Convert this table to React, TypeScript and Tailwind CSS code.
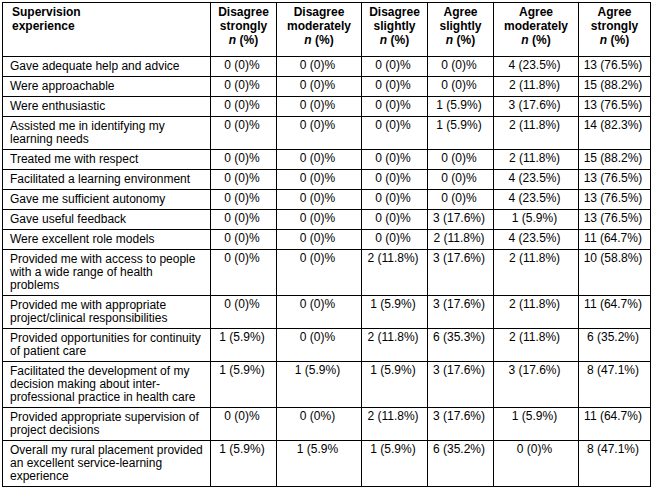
import React from "react";

type Row = { label: React.ReactNode; values: string[] };

const rows: Row[] = [
  { label: "Gave adequate help and advice", values: ["0 (0)%", "0 (0)%", "0 (0)%", "0 (0)%", "4 (23.5%)", "13 (76.5%)"] },
  { label: "Were approachable", values: ["0 (0)%", "0 (0)%", "0 (0)%", "0 (0)%", "2 (11.8%)", "15 (88.2%)"] },
  { label: "Were enthusiastic", values: ["0 (0)%", "0 (0)%", "0 (0)%", "1 (5.9%)", "3 (17.6%)", "13 (76.5%)"] },
  { label: <>Assisted me in identifying my<br />learning needs</>, values: ["0 (0)%", "0 (0)%", "0 (0)%", "1 (5.9%)", "2 (11.8%)", "14 (82.3%)"] },
  { label: "Treated me with respect", values: ["0 (0)%", "0 (0)%", "0 (0)%", "0 (0)%", "2 (11.8%)", "15 (88.2%)"] },
  { label: "Facilitated a learning environment", values: ["0 (0)%", "0 (0)%", "0 (0)%", "0 (0)%", "4 (23.5%)", "13 (76.5%)"] },
  { label: "Gave me sufficient autonomy", values: ["0 (0)%", "0 (0)%", "0 (0)%", "0 (0)%", "4 (23.5%)", "13 (76.5%)"] },
  { label: "Gave useful feedback", values: ["0 (0)%", "0 (0)%", "0 (0)%", "3 (17.6%)", "1 (5.9%)", "13 (76.5%)"] },
  { label: "Were excellent role models", values: ["0 (0)%", "0 (0)%", "0 (0)%", "2 (11.8%)", "4 (23.5%)", "11 (64.7%)"] },
  { label: <>Provided me with access to people<br />with a wide range of health<br />problems</>, values: ["0 (0)%", "0 (0)%", "2 (11.8%)", "3 (17.6%)", "2 (11.8%)", "10 (58.8%)"] },
  { label: <>Provided me with appropriate<br />project/clinical responsibilities</>, values: ["0 (0)%", "0 (0)%", "1 (5.9%)", "3 (17.6%)", "2 (11.8%)", "11 (64.7%)"] },
  { label: <>Provided opportunities for continuity<br />of patient care</>, values: ["1 (5.9%)", "0 (0)%", "2 (11.8%)", "6 (35.3%)", "2 (11.8%)", "6 (35.2%)"] },
  { label: <>Facilitated the development of my<br />decision making about inter-<br />professional practice in health care</>, values: ["1 (5.9%)", "1 (5.9%)", "1 (5.9%)", "3 (17.6%)", "3 (17.6%)", "8 (47.1%)"] },
  { label: <>Provided appropriate supervision of<br />project decisions</>, values: ["0 (0)%", "0 (0%)", "2 (11.8%)", "3 (17.6%)", "1 (5.9%)", "11 (64.7%)"] },
  { label: <>Overall my rural placement provided<br />an excellent service-learning<br />experience</>, values: ["1 (5.9%)", "1 (5.9%", "1 (5.9%)", "6 (35.2%)", "0 (0)%", "8 (47.1%)"] },
];

const headers: [string, string][] = [
  ["Disagree", "strongly"],
  ["Disagree", "moderately"],
  ["Disagree", "slightly"],
  ["Agree", "slightly"],
  ["Agree", "moderately"],
  ["Agree", "strongly"],
];

export default function App() {
  return (
    <div className="min-h-[495px] bg-white pl-[2px] pt-[2px] font-['Liberation_Sans',Arial,sans-serif] text-[12px] text-black">
      <div className="grid w-fit grid-cols-[207px_65px_84px_65px_65px_84px_71px] gap-px bg-black p-px">
        <div className="h-[53px] bg-white pl-[9px] pt-[2px] font-bold leading-[14px]">
          Supervision
          <br />
          experience
        </div>
        {headers.map(([a, b], i) => (
          <div key={i} className="h-[53px] bg-white pt-[2px] text-center font-bold leading-[14px]">
            {a}
            <br />
            {b}
            <br />
            <i>n</i> (%)
          </div>
        ))}
        {rows.map((r, ri) => (
          <React.Fragment key={ri}>
            <div className="whitespace-nowrap bg-white pb-[3px] pl-[7px] pt-[3px] leading-[13px]">{r.label}</div>
            {r.values.map((v, vi) => (
              <div key={vi} className="whitespace-nowrap bg-white pb-[3px] pr-[3px] pt-[2px] text-center leading-[13px]">
                {v}
              </div>
            ))}
          </React.Fragment>
        ))}
      </div>
    </div>
  );
}
